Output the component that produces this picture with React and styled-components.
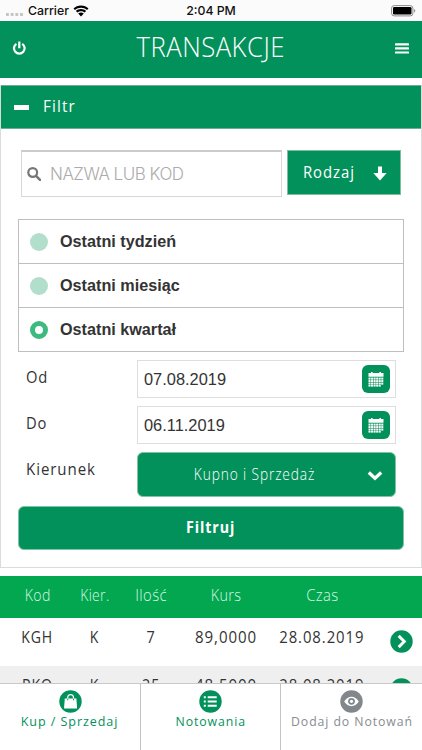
import React from "react";
import styled, { createGlobalStyle, css } from "styled-components";

const green = "#03915b";
const brand = '"Open Sans", "Noto Sans", sans-serif';
const helvetica = '"Liberation Sans", Arial, sans-serif';

const GlobalStyle = createGlobalStyle`
  * { box-sizing: border-box; }
  html, body { margin: 0; padding: 0; background: #fff; overflow: hidden; }
  button, input { font: inherit; margin: 0; }
`;

const Screen = styled.div`
  width: 422px;
  height: 750px;
  display: flex;
  flex-direction: column;
  overflow: hidden;
  background: #fff;
  color: #333;
  font-family: ${brand};
`;

/* Condensed brand lettering */
const Type = styled.span`
  display: inline-block;
  flex: none;
  white-space: nowrap;
  font-family: ${brand};
  font-size: ${(p) => p.$size || 16}px;
  font-weight: ${(p) => p.$weight || 390};
  letter-spacing: ${(p) => p.$track ?? 1}px;
  line-height: 22px;
  transform: scaleX(${(p) => p.$squeeze || 0.88});
  transform-origin: ${(p) => (p.$left ? "left" : "center")} center;
`;

const StatusBar = styled.div`
  flex: none;
  height: 21px;
  display: grid;
  grid-template-columns: 1fr auto 1fr;
  align-items: center;
  padding: 0 6px 0 6px;
  background: #fbfbfb;
  color: #111;
  font: 500 12.3px/20px Inter, sans-serif;
`;
const Carrier = styled.div`
  display: flex;
  align-items: center;
  svg { margin-left: 4px; }
`;
const Dots = styled.i`
  width: 18px;
  height: 3px;
  margin: 7px 4px 0 0;
  background: radial-gradient(circle at 1.5px 1.5px, #c4c4c4 1.4px, transparent 1.8px) 0 0 / 4.7px 3px;
`;
const BatterySlot = styled.div`
  justify-self: end;
  display: flex;
`;

const Header = styled.header`
  flex: none;
  height: 57px;
  display: flex;
  align-items: center;
  justify-content: space-between;
  padding: 0 13px 8px 12px;
  background: ${green};
  color: #fff;
  svg { margin-top: 5px; }
`;

const Panel = styled.section`
  flex: none;
  height: 483px;
  margin-top: 7px;
  border: 1px solid #d9dcdb;
  border-width: 0 1px 1px;
`;
const PanelTitle = styled.div`
  height: 44px;
  display: flex;
  align-items: center;
  gap: 14px;
  padding: 0 0 2px 13px;
  border: 1px solid #6fae92;
  border-left: 0;
  border-right: 0;
  background: ${green};
  color: #fff;
`;
const Minus = styled.i`
  width: 15px;
  height: 5px;
  margin-top: 3px;
  background: #fff;
`;
const PanelBody = styled.div`
  padding: 21px 17px 0;
`;

const SearchRow = styled.div`
  display: flex;
  gap: 5px;
  margin: 0 3px 22px;
`;
const SearchBox = styled.label`
  width: 261px;
  height: 47px;
  display: flex;
  align-items: center;
  padding: 0 0 0 5px;
  gap: 9px;
  border: 1px solid #d8d8d8;
  border-top: 2px solid #cbcbcb;
`;
const SearchInput = styled.input`
  width: 200px;
  padding: 0;
  border: 0;
  outline: 0;
  background: none;
  && { font: 300 17px/24px Inter, sans-serif; letter-spacing: -0.5px; }
  &::placeholder { color: #acacac; opacity: 1; }
`;
const KindButton = styled.button`
  width: 114px;
  height: 45px;
  display: flex;
  align-items: center;
  padding: 0 13px 2px 15px;
  justify-content: space-between;
  border: 1px solid #7fbd9f;
  background: ${green};
  color: #fff;
  svg { margin-top: 3px; flex: none; }
`;

const Options = styled.div`
  width: 386px;
  height: 133px;
  display: flex;
  flex-direction: column;
  border: 1px solid #bfbfbf;
`;
const Option = styled.label`
  flex: 1;
  display: flex;
  align-items: center;
  gap: 12px;
  padding-left: 11px;
  font: 700 16.2px/20px ${helvetica};
  span { margin-bottom: 2px; }
  & + & { border-top: 1px solid #bfbfbf; }
`;
const Radio = styled.i`
  width: 18px;
  height: 18px;
  border-radius: 50%;
  background: #b1dfcc;
  ${(p) => p.$on && css`
    background: #fff;
    border: 5px solid #3dba80;
  `}
`;

const Field = styled.div`
  display: flex;
  align-items: flex-start;
  justify-content: space-between;
  padding: 0 8px;
  margin-top: 8px;
`;
const FieldLabel = styled.div`
  padding-top: 6px;
`;
const DateBox = styled.div`
  width: 259px;
  height: 38px;
  display: flex;
  align-items: center;
  justify-content: space-between;
  padding: 0 5px 0 6px;
  border: 1px solid #dedede;
  font: 400 16.4px/20px ${helvetica};
`;
const CalendarButton = styled.button`
  width: 28px;
  height: 28px;
  padding: 0;
  display: grid;
  place-items: center;
  border: 0;
  border-radius: 6px;
  background: ${green};
`;
const Select = styled.button`
  width: 259px;
  height: 45px;
  display: grid;
  grid-template-columns: 1fr 16px;
  align-items: center;
  justify-items: center;
  padding: 0 12px 1px 4px;
  border: 1px solid #82c3a5;
  border-radius: 6px;
  background: ${green};
  color: #fff;
  svg { margin-top: 3px; }
`;
const Submit = styled.button`
  width: 386px;
  height: 44px;
  margin-top: 9px;
  padding: 0 0 3px;
  border: 1px solid #82c3a5;
  border-radius: 6px;
  background: ${green};
  color: #fff;
`;

const Table = styled.div`
  flex: 1;
  min-height: 0;
  margin-top: 8px;
  overflow: hidden;
`;
const Row = styled.div`
  height: 48px;
  display: grid;
  grid-template-columns: 75px 39px 75px 74px 118px 41px;
  justify-items: center;
  padding-top: 8px;
  background: ${(p) => (p.$alt ? "#efefef" : "#fff")};
  svg { margin: 4px 0 0 9px; justify-self: start; }
`;
const HeadRow = styled(Row)`
  height: 42px;
  grid-template-columns: 75px 40px 73px 77px 114px 43px;
  padding-top: 8px;
  background: #02a750;
  color: #d8f7e3;
`;

const Nav = styled.nav`
  flex: none;
  height: 67px;
  display: grid;
  grid-template-columns: 140px 140px 1fr;
  border-top: 1px solid #c9c9c9;
  background: #fff;
`;
const NavItem = styled.a`
  display: flex;
  flex-direction: column;
  align-items: center;
  padding-top: 6px;
  color: ${(p) => (p.$muted ? "#878c90" : green)};
  & + & { border-left: 1px solid #c4c4c4; }
  svg { flex: none; margin-bottom: -3px; }
`;

const Wifi = () => (
  <svg width="16" height="12" viewBox="0 0 16 12" fill="#000">
    <path d="M8 .5C5 .5 2.5 1.6.5 3.4l1.5 1.7C3.700 3.600 5.700 2.800 8 2.800s4.300.8 6 2.300l1.500-1.700C13.500 1.600 11 .5 8 .5zM8 4C6 4 4.300 4.700 2.900 5.900l1.500 1.700C5.400 6.700 6.600 6.200 8 6.200s2.600.5 3.600 1.400l1.500-1.700C11.700 4.700 10 4 8 4zM8 7.400c-1.100 0-2 .4-2.800 1L8 11.600l2.800-3.200c-.8-.6-1.700-1-2.800-1z" />
  </svg>
);
const Battery = () => (
  <svg width="25" height="12" viewBox="0 0 25 12">
    <rect x=".6" y=".6" width="21.300" height="10.300" rx="2.600" fill="none" stroke="#8a8a8a" />
    <rect x="2" y="2" width="18.500" height="7.500" rx="1.300" fill="#000" />
    <path d="M23 4v3.600c.9-.3 1.300-1 1.300-1.800S23.900 4.300 23 4z" fill="#999" />
  </svg>
);
const Power = () => (
  <svg width="14" height="14" viewBox="0 0 14 14" fill="none" stroke="#fff" strokeWidth="2.200">
    <path d="M4.400 2.800a5.300 5.300 0 1 0 5.800 0M7.300.6v6.600" />
  </svg>
);
const Burger = () => (
  <svg width="14" height="11" viewBox="0 0 14 11" fill="#fff">
    <rect width="14" height="2.200" rx=".5" y=".2" />
    <rect width="14" height="2.200" rx=".5" y="4.300" />
    <rect width="14" height="2.200" rx=".5" y="8.400" />
  </svg>
);
const Magnifier = () => (
  <svg width="14" height="14" viewBox="0 0 14 14" fill="none" stroke="#777">
    <circle cx="5.700" cy="5.500" r="4.400" strokeWidth="2.200" />
    <path d="M9 8.900l4 4" strokeWidth="2.500" strokeLinecap="round" />
  </svg>
);
const ArrowDown = () => (
  <svg width="14" height="15" viewBox="0 0 14 15" fill="#fff">
    <path d="M5 .5h4v6.500h4.700L7 14.500.3 7H5z" />
  </svg>
);
const Calendar = () => (
  <svg width="16" height="16" viewBox="0 0 16 16" fill="#fff">
    <path d="M.5 2H3V1h1.600v1h6.800V1H13v1h2.500v3.700H.5z" />
    {[6.6, 9.1, 11.6, 14].map((y, r) =>
      [0.5, 3.05, 5.6, 8.15, 10.7, 13.25].slice(0, r === 3 ? 5 : 6).map((x) => (
        <rect key={`${x}-${y}`} x={x} y={y} width="2.050" height={r === 3 ? 1.6 : 2} />
      ))
    )}
  </svg>
);
const ChevronDown = () => (
  <svg width="16" height="11" viewBox="0 0 16 11" fill="none" stroke="#fff" strokeWidth="3.300">
    <path d="M1.800 2.500L8 8.200l6.200-5.700" />
  </svg>
);
const Go = () => (
  <svg width="23" height="23" viewBox="0 0 23 23">
    <circle cx="11.500" cy="11.500" r="11.200" fill={green} />
    <path d="M8.700 5.900l5.600 5.600-5.600 5.600" fill="none" stroke="#fff" strokeWidth="2.900" />
  </svg>
);
const Bag = () => (
  <svg width="23" height="23" viewBox="0 0 23 23">
    <circle cx="11.500" cy="11.500" r="11.200" fill={green} />
    <path d="M5.800 8.500h11.600l.7 10H5z" fill="#fff" />
    <path d="M8.700 10.500V7.600a2.900 2.900 0 0 1 5.800 0v2.900" fill="none" stroke="#fff" strokeWidth="1.200" />
    <path d="M8.700 8.700v1.600M14.500 8.700v1.600" stroke={green} strokeWidth="1" />
  </svg>
);
const List = () => (
  <svg width="23" height="23" viewBox="0 0 23 23">
    <circle cx="11.500" cy="11.500" r="11.200" fill={green} />
    <path d="M8.700 7.300h9M8.700 11.500h9M8.700 15.700h9" stroke="#fff" strokeWidth="2" />
    <path d="M4.800 7.300h2M4.800 11.500h2M4.800 15.700h2" stroke="#fff" strokeWidth="2" />
  </svg>
);
const Eye = () => (
  <svg width="23" height="23" viewBox="0 0 23 23">
    <circle cx="11.500" cy="11.500" r="11.200" fill="#82878b" />
    <path d="M4.200 11.500c3.700-6.300 10.900-6.300 14.600 0-3.700 6.200-10.900 6.200-14.600 0z" fill="#fff" />
    <circle cx="11.500" cy="11.300" r="3.400" fill="#82878b" />
    <circle cx="11.500" cy="11.300" r="1.600" fill="#fff" />
  </svg>
);

const columns = [
  ["Kod", 0.88],
  ["Kier.", 0.87],
  ["Ilość", 0.93],
  ["Kurs", 0.9],
  ["Czas", 0.93],
];
const squeezes = [0.88, 0.88, 0.9, 0.94, 0.93];
const trades = [
  ["KGH", "K", "7", "89,0000", "28.08.2019"],
  ["PKO", "K", "25", "48,5000", "28.08.2019"],
];
const periods = ["Ostatni tydzień", "Ostatni miesiąc", "Ostatni kwartał"];

export default function App() {
  return (
    <Screen>
      <GlobalStyle />
      <StatusBar>
        <Carrier><Dots />Carrier<Wifi /></Carrier>
        <span>2:04 PM</span>
        <BatterySlot><Battery /></BatterySlot>
      </StatusBar>
      <Header>
        <Power />
        <Type as="h1" $size={28} $weight={300} $track={0.5} $squeeze={0.92}>TRANSAKCJE</Type>
        <Burger />
      </Header>
      <Panel>
        <PanelTitle><Minus /><Type $left $squeeze={0.95} $track={1.2}>Filtr</Type></PanelTitle>
        <PanelBody>
          <SearchRow>
            <SearchBox><Magnifier /><SearchInput placeholder="NAZWA LUB KOD" /></SearchBox>
            <KindButton><Type $left $squeeze={0.93}>Rodzaj</Type><ArrowDown /></KindButton>
          </SearchRow>
          <Options>
            {periods.map((text, i) => (
              <Option key={text}><Radio $on={i === 2} /><span>{text}</span></Option>
            ))}
          </Options>
          <Field>
            <FieldLabel><Type $left $squeeze={0.92}>Od</Type></FieldLabel>
            <DateBox>07.08.2019<CalendarButton aria-label="Od"><Calendar /></CalendarButton></DateBox>
          </Field>
          <Field>
            <FieldLabel><Type $left $squeeze={0.92}>Do</Type></FieldLabel>
            <DateBox>06.11.2019<CalendarButton aria-label="Do"><Calendar /></CalendarButton></DateBox>
          </Field>
          <Field>
            <FieldLabel><Type $left $squeeze={0.94}>Kierunek</Type></FieldLabel>
            <Select><Type $weight={300} $squeeze={0.86}>Kupno i Sprzedaż</Type><ChevronDown /></Select>
          </Field>
          <Submit><Type $weight={700} $squeeze={0.89}>Filtruj</Type></Submit>
        </PanelBody>
      </Panel>
      <Table>
        <HeadRow>
          {columns.map(([name, squeeze]) => (
            <Type key={name} $weight={300} $track={0.4} $squeeze={squeeze}>{name}</Type>
          ))}
        </HeadRow>
        {trades.map((cells, i) => (
          <Row key={cells[0]} $alt={i % 2 === 1}>
            {cells.map((cell, c) => (
              <Type key={c} $squeeze={squeezes[c]}>{cell}</Type>
            ))}
            <Go />
          </Row>
        ))}
      </Table>
      <Nav>
        <NavItem><Bag /><Type $size={13.5} $squeeze={0.93}>Kup / Sprzedaj</Type></NavItem>
        <NavItem><List /><Type $size={13.5} $squeeze={0.91}>Notowania</Type></NavItem>
        <NavItem $muted><Eye /><Type $size={13.5} $squeeze={0.91}>Dodaj do Notowań</Type></NavItem>
      </Nav>
    </Screen>
  );
}
